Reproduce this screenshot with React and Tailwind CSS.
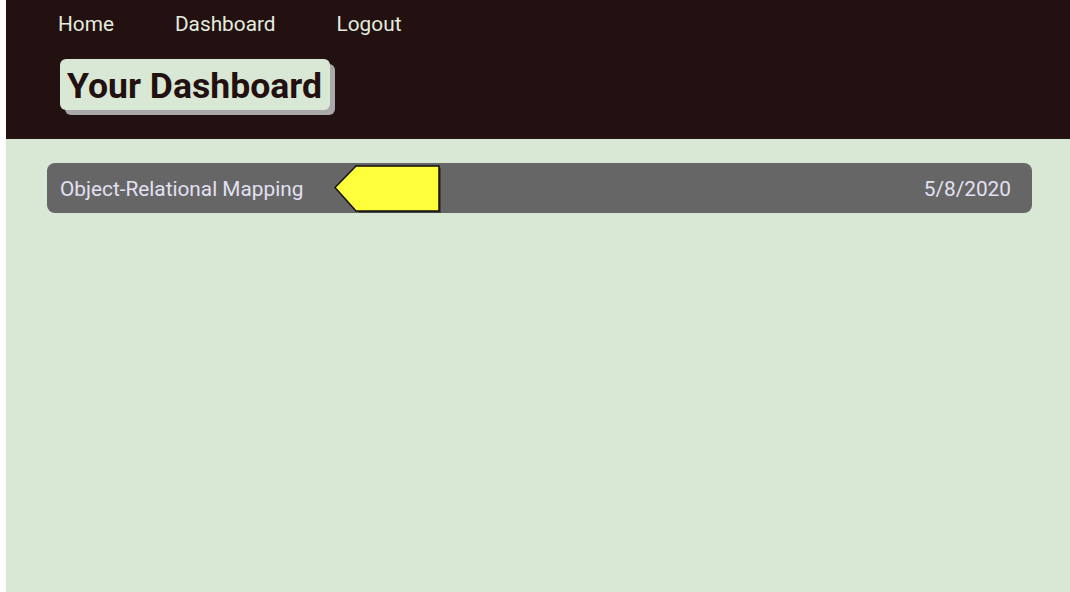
import React from "react";

function Arrow() {
  return (
    <svg width="108" height="50" viewBox="0 0 108 50" className="block">
      <polygon points="2,23 24,1 106,1 106,46 24,46" fill="#000" opacity="0.35" transform="translate(1,2)" />
      <polygon points="1,22.5 22,1 105,1 105,46 22,46" fill="#ffff3c" stroke="#111" strokeWidth="1.5" />
    </svg>
  );
}

function App() {
  return (
    <div className="min-h-screen bg-white pl-[6px] font-['Roboto',sans-serif]">
      <div className="min-h-screen bg-[#d9e8d4]">
        <header className="h-[139px] bg-[#231010] pl-[52px]">
          <nav className="flex h-[50px] items-center gap-[61px] text-[20.8px] text-[#e4ecdf]">
            <a href="#">Home</a>
            <a href="#">Dashboard</a>
            <a href="#">Logout</a>
          </nav>
          <h1 className="ml-[2px] mt-[9px] inline-block rounded-[6px] bg-[#d9e8d4] pl-[7px] pr-[8px] pt-[4px] pb-0 text-[35.6px] font-bold leading-[47px] text-[#231010] shadow-[5px_5px_0_#a9a9a9]">
            Your Dashboard
          </h1>
        </header>
        <main className="pl-[41px] pr-[38px] pt-[24px]">
          <div className="flex h-[50px] items-center rounded-[8px] bg-[#666666] pl-[13px] pr-[21px] pt-[3px] text-[20.8px] text-[#e2e0f2]">
            <span>Object-Relational Mapping</span>
            <div className="ml-[31px] mt-[1px]">
              <Arrow />
            </div>
            <span className="ml-auto">5/8/2020</span>
          </div>
        </main>
      </div>
    </div>
  );
}

export default App;
